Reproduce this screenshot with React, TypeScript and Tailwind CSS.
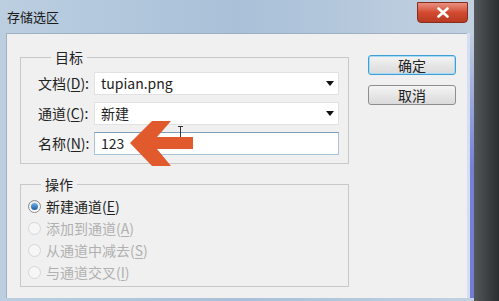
import React from "react";

const font = { fontFamily: '"Noto Sans CJK SC", "Noto Sans", sans-serif' };

function Mn({ c }: { c: string }) {
  return <span className="underline underline-offset-2">{c}</span>;
}

function Row({ label, k, children }: { label: string; k: string; children: React.ReactNode }) {
  return (
    <div className="flex items-center h-[23px]">
      <div className="w-[56px] text-[14px] text-[#222] leading-[23px]">
        {label}(<Mn c={k} />):
      </div>
      {children}
    </div>
  );
}

function Select({ value }: { value: string }) {
  return (
    <div className="w-[245px] h-[23px] bg-white border border-[#e2e2e2] flex items-center justify-between pl-[6px] pr-[4px] text-[14px] text-[#222]">
      <span>{value}</span>
      <svg width="8" height="5" viewBox="0 0 8 5">
        <path d="M0 0H8L4 5Z" fill="#111" />
      </svg>
    </div>
  );
}

function Radio({ label, k, checked, disabled }: { label: string; k: string; checked?: boolean; disabled?: boolean }) {
  return (
    <div className={`flex items-center gap-[5px] h-[22px] text-[14px] ${disabled ? "text-[#b0b0b0]" : "text-[#222]"}`}>
      {checked ? (
        <span className="w-[13px] h-[13px] rounded-full border border-[#8a8a8a] bg-gradient-to-b from-[#e8e8e8] to-[#ffffff] flex items-center justify-center">
          <span className="w-[7px] h-[7px] rounded-full bg-gradient-to-b from-[#6fb0ea] to-[#1d5a9e]" />
        </span>
      ) : (
        <span className="w-[13px] h-[13px] rounded-full border border-[#d6d6d6] bg-[#f6f6f6]" />
      )}
      <span>
        {label}(<Mn c={k} />)
      </span>
    </div>
  );
}

export default function App() {
  return (
    <div className="relative w-[499px] h-[301px] flex overflow-hidden bg-[#2f3234]" style={font}>
      <div className="w-[474px] h-full flex flex-col bg-gradient-to-r from-[#bccfe1] via-[#a9c0d8] to-[#c2d1e0]">
        <div className="h-[33px] flex justify-between items-start">
          <div className="pl-[7px] pt-[8px] text-[13px] leading-[18px] text-[#1a1a1a]">存储选区</div>
          <div className="mt-[2px] mr-[6px] w-[51px] h-[21px] rounded-b-[4px] border border-[#8a2c1c] bg-gradient-to-b from-[#e89080] via-[#d24a30] to-[#b83a22] flex items-center justify-center">
            <svg width="12" height="11" viewBox="0 0 12 11">
              <path d="M1.5 1.5L10.5 9.5M10.5 1.5L1.5 9.5" stroke="#fff" strokeWidth="2.6" strokeLinecap="round" />
            </svg>
          </div>
        </div>
        <div className="flex-1 flex pl-[6px] pb-[3px]">
          <div className="flex-1 bg-[#f0f0f0] border-t border-l border-[#9fb0c2] flex items-start pl-[13px] pt-[14px] gap-[19px]">
            <div className="w-[329px] flex flex-col gap-[11px]">
              <fieldset className="border border-[#c8c8c8] pl-[17px] pr-[8px] pt-[6px] pb-[8px] flex flex-col gap-[7px]">
                <legend className="ml-[13px] px-[4px] text-[14px] leading-[18px] text-[#222]">目标</legend>
                <Row label="文档" k="D">
                  <Select value="tupian.png" />
                </Row>
                <Row label="通道" k="C">
                  <Select value="新建" />
                </Row>
                <Row label="名称" k="N">
                  <div className="w-[245px] h-[23px] bg-white border border-[#a9c4da] border-t-[#7d9dba] flex items-center pl-[6px] text-[14px] text-[#222]">
                    123
                  </div>
                </Row>
              </fieldset>
              <fieldset className="border border-[#c8c8c8] pl-[7px] pt-[2px] pb-[3px] flex flex-col">
                <legend className="ml-[13px] px-[4px] text-[14px] leading-[18px] text-[#222]">操作</legend>
                <Radio label="新建通道" k="E" checked />
                <Radio label="添加到通道" k="A" disabled />
                <Radio label="从通道中减去" k="S" disabled />
                <Radio label="与通道交叉" k="I" disabled />
              </fieldset>
            </div>
            <div className="mt-[7px] flex flex-col gap-[10px]">
              <button className="w-[88px] h-[20px] rounded-[3px] border border-[#3d9fd4] shadow-[inset_0_0_0_1px_#a8dcf4] bg-gradient-to-b from-[#f4f4f4] to-[#dadada] text-[14px] leading-[18px] text-[#222]">
                确定
              </button>
              <button className="w-[88px] h-[20px] rounded-[3px] border border-[#8e8e8e] bg-gradient-to-b from-[#f4f4f4] to-[#dadada] text-[14px] leading-[18px] text-[#222]">
                取消
              </button>
            </div>
          </div>
          <div className="w-[7px] flex">
            <div className="w-[3px] bg-[#d4def0]" />
            <div className="w-[4px] bg-gradient-to-b from-[#c4d0de] via-[#7482d6] to-[#6f7ed4]" />
          </div>
        </div>
      </div>
      <div className="flex-1 bg-gradient-to-r from-[#54585b] to-[#2b2e30]" />

      <svg className="absolute left-[125px] top-[116px]" width="72" height="55" viewBox="125 116 72 55">
        <polygon
          points="130,143 152,121 171,121 157,137 193,137 193,149 157,149 171,166 152,166"
          fill="#e05a2e"
        />
      </svg>
      <svg className="absolute left-[176px] top-[125px]" width="9" height="14" viewBox="0 0 9 14">
        <path d="M2 1.5H7M4.5 1.5V12" stroke="#333" strokeWidth="1" />
      </svg>
    </div>
  );
}
